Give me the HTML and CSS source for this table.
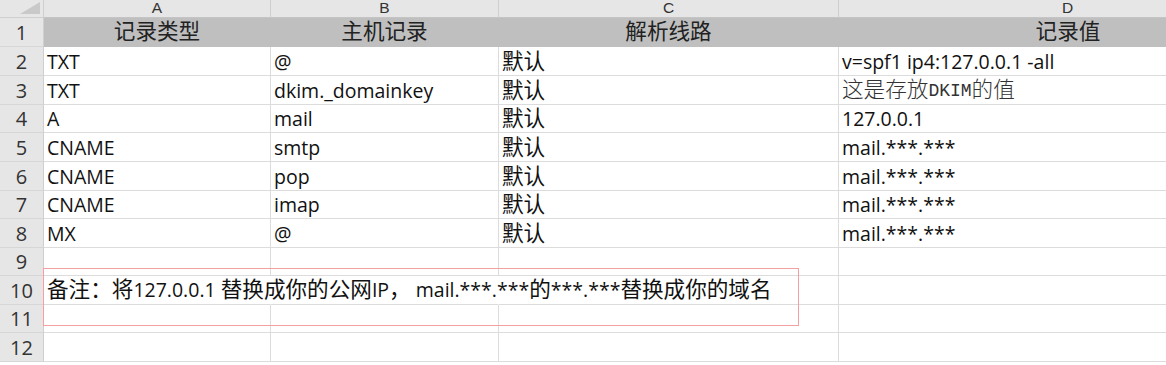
FILE: index.html
```html
<!DOCTYPE html>
<html lang="zh-CN">
<head>
<meta charset="utf-8">
<title>DNS 记录</title>
<link rel="stylesheet" href="styles.css">
</head>
<body>
<div class="sheet">
  <div class="grid">
    <div class="corner"><span class="tri"></span></div>
    <div class="colhead">A</div>
    <div class="colhead">B</div>
    <div class="colhead">C</div>
    <div class="colhead last">D</div>

    <div class="rowhead">1</div>
    <div class="cell th"><span class="zh">记录类型</span></div>
    <div class="cell th"><span class="zh">主机记录</span></div>
    <div class="cell th"><span class="zh">解析线路</span></div>
    <div class="cell th last"><span class="zh">记录值</span></div>

    <div class="rowhead">2</div>
    <div class="cell">TXT</div>
    <div class="cell">@</div>
    <div class="cell"><span class="zh">默认</span></div>
    <div class="cell last">v=spf1 ip4:127.0.0.1 -all</div>

    <div class="rowhead">3</div>
    <div class="cell">TXT</div>
    <div class="cell">dkim._domainkey</div>
    <div class="cell"><span class="zh">默认</span></div>
    <div class="cell last song"><span class="zh">这是存放</span><span class="mono">DKIM</span><span class="zh">的值</span></div>

    <div class="rowhead">4</div>
    <div class="cell">A</div>
    <div class="cell">mail</div>
    <div class="cell"><span class="zh">默认</span></div>
    <div class="cell last">127.0.0.1</div>

    <div class="rowhead">5</div>
    <div class="cell">CNAME</div>
    <div class="cell">smtp</div>
    <div class="cell"><span class="zh">默认</span></div>
    <div class="cell last">mail.***.***</div>

    <div class="rowhead">6</div>
    <div class="cell">CNAME</div>
    <div class="cell">pop</div>
    <div class="cell"><span class="zh">默认</span></div>
    <div class="cell last">mail.***.***</div>

    <div class="rowhead">7</div>
    <div class="cell">CNAME</div>
    <div class="cell">imap</div>
    <div class="cell"><span class="zh">默认</span></div>
    <div class="cell last">mail.***.***</div>

    <div class="rowhead">8</div>
    <div class="cell">MX</div>
    <div class="cell">@</div>
    <div class="cell"><span class="zh">默认</span></div>
    <div class="cell last">mail.***.***</div>

    <div class="rowhead">9</div>
    <div class="cell"></div>
    <div class="cell"></div>
    <div class="cell"></div>
    <div class="cell last"></div>

    <div class="rowhead">10</div>
    <div class="cell spill"><span class="note"><span class="zh">备注：将</span>127.0.0.1 <span class="zh">替换成你的公网</span>IP<span class="zh">，</span> mail.***.***<span class="zh">的</span>***.***<span class="zh">替换成你的域名</span></span></div>
    <div class="cell spill"></div>
    <div class="cell"></div>
    <div class="cell last"></div>

    <div class="rowhead">11</div>
    <div class="cell"></div>
    <div class="cell"></div>
    <div class="cell"></div>
    <div class="cell last"></div>

    <div class="rowhead">12</div>
    <div class="cell"></div>
    <div class="cell"></div>
    <div class="cell"></div>
    <div class="cell last"></div>
  </div>
  <div class="callout"></div>
</div>
</body>
</html>
```

FILE: styles.css
```css
* { box-sizing: border-box; }
html, body { margin: 0; padding: 0; background: #ffffff; overflow: hidden; }
body { width: 1166px; height: 365px; }

.sheet {
  position: relative;
  width: 1166px;
  height: 365px;
  overflow: hidden;
  font-family: "Open Sans", "Noto Sans CJK SC", sans-serif;
  color: #111;
}

.grid {
  display: grid;
  grid-template-columns: 44px 227px 228px 340px 458px;
  grid-template-rows: 18px 29px 29px 29px 28px 29px 29px 28px 29px 28px 29px 28px 29px;
  width: 1297px;
}

.corner {
  position: relative;
  background: #e6e6e6;
  border-right: 1px solid #cfcfcf;
  border-bottom: 1px solid #cfcfcf;
}
.tri {
  position: absolute;
  right: 3px;
  bottom: 3px;
  width: 0;
  height: 0;
  border-style: solid;
  border-width: 0 0 12px 20px;
  border-color: transparent transparent #c9c9c9 transparent;
}

.colhead {
  background: #e6e6e6;
  border-right: 1px solid #cfcfcf;
  border-bottom: 1px solid #c4c4c4;
  text-align: center;
  font-family: "Liberation Sans", sans-serif;
  font-size: 15.5px;
  line-height: 15px;
  color: #333;
}

.rowhead {
  background: #e6e6e6;
  border-right: 1px solid #cfcfcf;
  border-bottom: 1px solid #d6d6d6;
  text-align: center;
  font-size: 20px;
  line-height: 1;
  color: #333;
  display: flex;
  align-items: flex-end;
  justify-content: center;
  padding-bottom: 3px;
}

.cell {
  border-right: 1px solid #dcdcdc;
  border-bottom: 1px solid #dcdcdc;
  font-size: 19.5px;
  line-height: 1;
  padding: 0 0 4px 3px;
  display: flex;
  align-items: flex-end;
  white-space: nowrap;
}
.cell.last { border-right: none; }

.th {
  background: #bfbfbf;
  border-right-color: #bfbfbf;
  border-bottom-color: #bfbfbf;
  justify-content: center;
  color: #222;
  padding-left: 0;
  padding-bottom: 3px;
}

.zh { font-size: 21.6px; font-family: "Liberation Sans", "Noto Sans CJK SC", sans-serif; }
.cell > .zh { margin-bottom: -2px; }
.th > .zh { margin-bottom: 0; }

.song { color: #333; }
.song .zh { font-weight: 300; }
.song > .zh { margin-bottom: -1px; }
.mono { font-family: "Liberation Mono", monospace; font-size: 18px; }

.spill { border-right-color: transparent; overflow: visible; position: relative; z-index: 1; }
.note { white-space: nowrap; margin-bottom: -1px; }

.callout {
  position: absolute;
  left: 43px;
  top: 268px;
  width: 756px;
  height: 58px;
  border: 1px solid #f2a0a0;
  pointer-events: none;
}
```
